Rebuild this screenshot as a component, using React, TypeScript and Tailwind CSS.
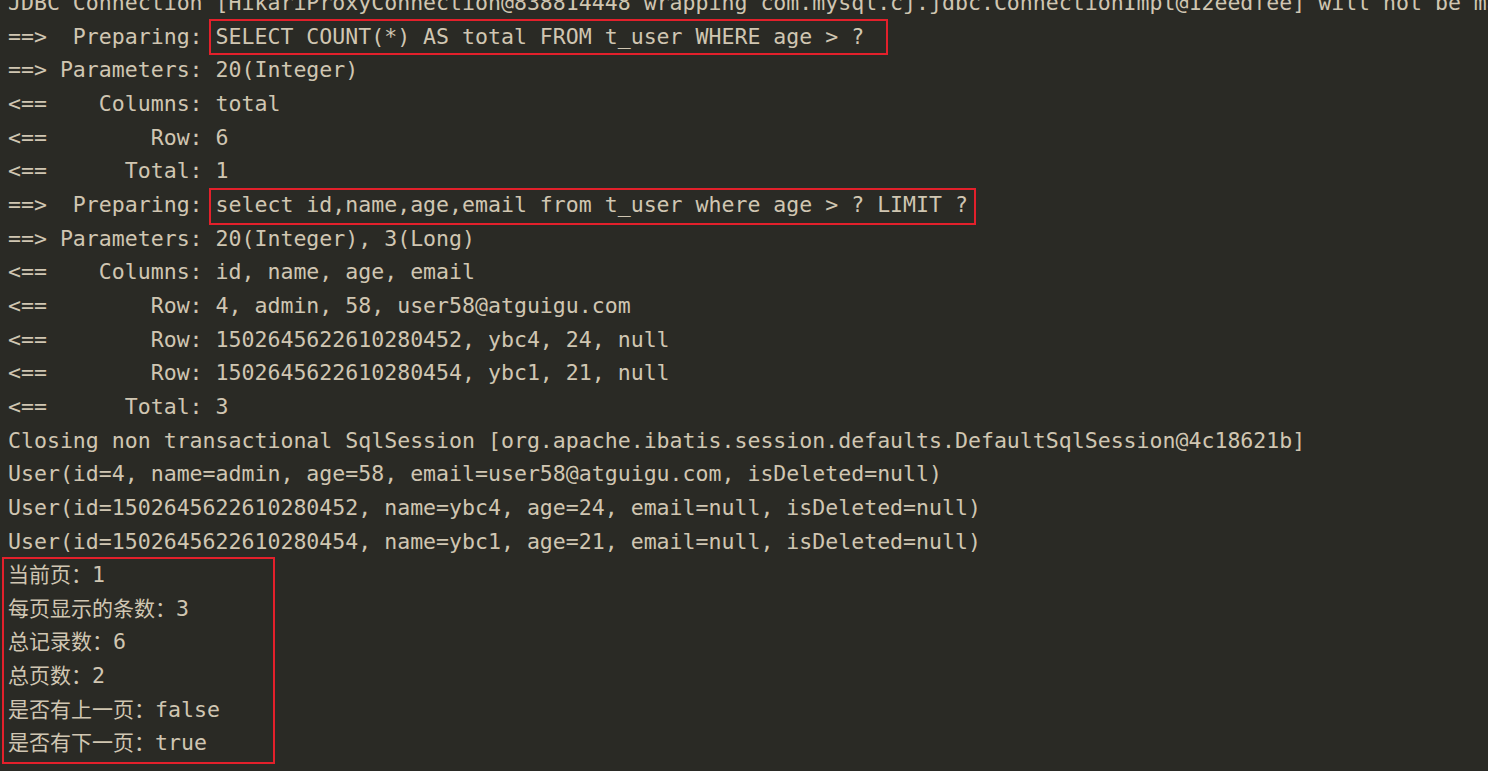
const lines: string[] = [
  "JDBC Connection [HikariProxyConnection@838814448 wrapping com.mysql.cj.jdbc.ConnectionImpl@12eedfee] will not be managed by Spring",
  "==>  Preparing: SELECT COUNT(*) AS total FROM t_user WHERE age > ?",
  "==> Parameters: 20(Integer)",
  "<==    Columns: total",
  "<==        Row: 6",
  "<==      Total: 1",
  "==>  Preparing: select id,name,age,email from t_user where age > ? LIMIT ?",
  "==> Parameters: 20(Integer), 3(Long)",
  "<==    Columns: id, name, age, email",
  "<==        Row: 4, admin, 58, user58@atguigu.com",
  "<==        Row: 1502645622610280452, ybc4, 24, null",
  "<==        Row: 1502645622610280454, ybc1, 21, null",
  "<==      Total: 3",
  "Closing non transactional SqlSession [org.apache.ibatis.session.defaults.DefaultSqlSession@4c18621b]",
  "User(id=4, name=admin, age=58, email=user58@atguigu.com, isDeleted=null)",
  "User(id=1502645622610280452, name=ybc4, age=24, email=null, isDeleted=null)",
  "User(id=1502645622610280454, name=ybc1, age=21, email=null, isDeleted=null)",
];

const pageInfo: [string, string][] = [
  ["当前页：", "1"],
  ["每页显示的条数：", "3"],
  ["总记录数：", "6"],
  ["总页数：", "2"],
  ["是否有上一页：", "false"],
  ["是否有下一页：", "true"],
];

export default function App() {
  return (
    <div
      className="relative h-[771px] w-[1488px] overflow-hidden bg-[#2a2a25] text-[#d0c6b2]"
      style={{ fontFamily: '"DejaVu Sans Mono", "Noto Sans CJK SC", monospace' }}
    >
      <div className="-mt-[14px] pl-[8px] text-[21.55px] leading-[33.67px] whitespace-pre">
        {lines.map((line, i) => (
          <div key={i} className="h-[33.67px]">
            {line}
          </div>
        ))}
        {pageInfo.map(([label, value]) => (
          <div key={label} className="h-[33.67px] overflow-visible">
            <span className="text-[21px]">{label}</span>
            {value}
          </div>
        ))}
      </div>

      {/* red annotation boxes */}
      <div className="pointer-events-none absolute left-[209px] top-[19px] h-[36px] w-[679px] border-2 border-[#e3202b]" />
      <div className="pointer-events-none absolute left-[209px] top-[188px] h-[37px] w-[767px] border-2 border-[#e3202b]" />
      <div className="pointer-events-none absolute left-[2px] top-[557px] h-[207px] w-[273px] border-2 border-[#e3202b]" />
    </div>
  );
}
